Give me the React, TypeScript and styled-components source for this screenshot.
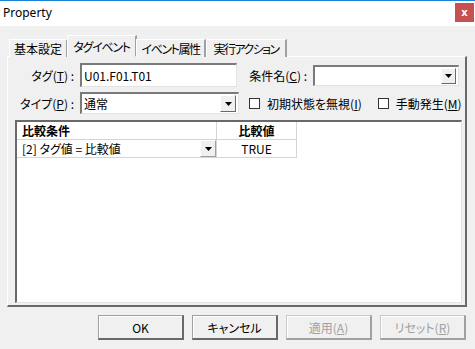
import React from 'react';
import styled, { createGlobalStyle } from 'styled-components';

const GlobalStyle = createGlobalStyle`
  html, body {
    margin: 0;
    padding: 0;
    background: #f0f0f0;
  }
  body {
    font-family: "Noto Sans CJK JP", "Noto Sans", sans-serif;
    font-size: 12px;
    font-feature-settings: "palt";
    color: #000;
  }
`;

const Window = styled.div`
  width: 475px;
  height: 349px;
  display: flex;
  flex-direction: column;
  background: #f0f0f0;
  overflow: hidden;
`;

const TitleBar = styled.div`
  height: 25px;
  border-top: 1px solid #1883d7;
  background: #fff;
  display: flex;
  align-items: center;
  justify-content: space-between;
  padding-left: 3px;
`;

const Title = styled.div`
  font-family: "Noto Sans", "Liberation Sans", sans-serif;
  font-size: 12px;
  margin-top: -2px;
`;

const CloseButton = styled.div`
  width: 19px;
  height: 19px;
  margin-right: 1px;
  margin-top: -3px;
  background: #c75050;
  color: #fff;
  font-family: "DejaVu Sans", sans-serif;
  font-weight: bold;
  font-size: 10px;
  display: flex;
  align-items: center;
  justify-content: center;
`;

const Body = styled.div`
  flex: 1;
  padding: 9px 8px 0 7px;
  display: flex;
  flex-direction: column;
`;

const TabRow = styled.div`
  display: flex;
  align-items: flex-end;
  height: 22px;
  padding-left: 2px;
  position: relative;
  z-index: 1;
`;

const Tab = styled.div<{ $active?: boolean; $w: number; $ls?: number }>`
  width: ${p => p.$w}px;
  height: ${p => (p.$active ? 22 : 18)}px;
  margin: 0 ${p => (p.$active ? -1 : 0)}px;
  box-sizing: border-box;
  background: #f0f0f0;
  border-top: 1px solid #fff;
  border-left: 1px solid #fff;
  border-right: 2px solid #a0a0a0;
  border-bottom: ${p => (p.$active ? '1px solid #f0f0f0' : 'none')};
  display: flex;
  align-items: center;
  justify-content: center;
  font-size: 12px;
  letter-spacing: ${p => p.$ls ?? 0}px;
  white-space: nowrap;
`;

const Panel = styled.div`
  height: 251px;
  box-sizing: border-box;
  border-top: 1px solid #fff;
  border-left: 1px solid #fff;
  border-right: 2px solid #696969;
  border-bottom: 2px solid #696969;
  margin-top: -1px;
  padding: 6px 0 0 7px;
  display: flex;
  flex-direction: column;
`;

const FormRow = styled.div<{ $mt?: number }>`
  display: flex;
  align-items: center;
  margin-top: ${p => p.$mt ?? 0}px;
`;

const Label = styled.div<{ $w: number }>`
  width: ${p => p.$w}px;
  text-align: right;
  padding-right: 6px;
  box-sizing: border-box;
  white-space: nowrap;
`;

const TextBox = styled.div<{ $w: number; $h: number }>`
  width: ${p => p.$w}px;
  height: ${p => p.$h}px;
  box-sizing: border-box;
  background: #fff;
  border-top: 2px solid #7a7a7a;
  border-left: 2px solid #7a7a7a;
  border-right: 1px solid #e3e3e3;
  border-bottom: 1px solid #e3e3e3;
  padding: 1px 2px;
  display: flex;
  align-items: center;
  position: relative;
`;

const DropButton = styled.div<{ $size: number }>`
  position: absolute;
  right: 2px;
  top: 1px;
  bottom: 1px;
  width: ${p => p.$size}px;
  box-sizing: border-box;
  background: #f0f0f0;
  border-top: 1px solid #fff;
  border-left: 1px solid #fff;
  border-right: 1px solid #696969;
  border-bottom: 1px solid #696969;
  display: flex;
  align-items: center;
  justify-content: center;
`;

const Arrow = () => (
  <svg width="7" height="4" viewBox="0 0 7 4">
    <path d="M0 0H7L3.5 4Z" fill="#000" />
  </svg>
);

const Check = styled.div<{ $ml: number }>`
  display: flex;
  align-items: center;
  gap: 7px;
  margin-left: ${p => p.$ml}px;
  white-space: nowrap;
`;

const CheckBox = styled.div`
  width: 11px;
  height: 11px;
  box-sizing: border-box;
  background: #fff;
  border: 1px solid #333;
`;

const Grid = styled.div`
  margin-top: 6px;
  width: 447px;
  height: 183px;
  box-sizing: border-box;
  background: #fff;
  border-top: 2px solid #696969;
  border-left: 2px solid #696969;
  border-right: 1px solid #e3e3e3;
  border-bottom: 1px solid #e3e3e3;
`;

const GridRow = styled.div`
  display: flex;
  height: 18px;
`;

const Cell = styled.div<{ $w: number; $head?: boolean; $center?: boolean }>`
  width: ${p => p.$w}px;
  box-sizing: border-box;
  border-right: 1px solid #d4d4d4;
  border-bottom: 1px solid #d4d4d4;
  padding: 0 5px;
  display: flex;
  align-items: center;
  justify-content: ${p => (p.$center ? 'center' : 'flex-start')};
  font-weight: ${p => (p.$head ? 'bold' : 'normal')};
  position: relative;
  white-space: nowrap;
`;

const HeaderFill = styled.div`
  flex: 1;
`;

const CellDrop = styled.div`
  position: absolute;
  right: 0;
  top: 0;
  bottom: 0;
  width: 16px;
  box-sizing: border-box;
  background: #f0f0f0;
  border-top: 1px solid #fff;
  border-left: 1px solid #fff;
  border-right: 1px solid #a0a0a0;
  border-bottom: 1px solid #a0a0a0;
  display: flex;
  align-items: center;
  justify-content: center;
`;

const ButtonRow = styled.div`
  display: flex;
  justify-content: flex-end;
  gap: 8px;
  margin-top: 8px;
  padding-right: 1px;
`;

const Button = styled.div<{ $disabled?: boolean }>`
  width: 86px;
  height: 25px;
  box-sizing: border-box;
  background: #f0f0f0;
  border-top: 1px solid ${p => (p.$disabled ? '#c8c8c8' : '#a0a0a0')};
  border-left: 1px solid ${p => (p.$disabled ? '#c8c8c8' : '#a0a0a0')};
  border-right: 2px solid ${p => (p.$disabled ? '#a0a0a0' : '#696969')};
  border-bottom: 2px solid ${p => (p.$disabled ? '#a0a0a0' : '#696969')};
  box-shadow: inset 1px 1px 0 #fff;
  display: flex;
  align-items: center;
  justify-content: center;
  color: ${p => (p.$disabled ? '#a0a0a0' : '#000')};
  white-space: nowrap;
`;

export default function App() {
  return (
    <>
      <GlobalStyle />
      <Window>
        <TitleBar>
          <Title>Property</Title>
          <CloseButton>x</CloseButton>
        </TitleBar>
        <Body>
          <TabRow>
            <Tab $w={59}>基本設定</Tab>
            <Tab $active $w={70} $ls={-1.3}>
              タグイベント
            </Tab>
            <Tab $w={70} $ls={-1.4}>
              イベント属性
            </Tab>
            <Tab $w={81} $ls={-1.6}>
              実行アクション
            </Tab>
          </TabRow>
          <Panel>
            <FormRow>
              <Label $w={65}>
                タグ(<u>T</u>) :
              </Label>
              <TextBox $w={157} $h={24}>U01.F01.T01</TextBox>
              <Label $w={76}>
                条件名(<u>C</u>) :
              </Label>
              <TextBox $w={146} $h={21}>
                <DropButton $size={15}>
                  <Arrow />
                </DropButton>
              </TextBox>
            </FormRow>
            <FormRow $mt={5}>
              <Label $w={65}>
                タイプ(<u>P</u>) :
              </Label>
              <TextBox $w={159} $h={22}>
                通常
                <DropButton $size={16}>
                  <Arrow />
                </DropButton>
              </TextBox>
              <Check $ml={10}>
                <CheckBox />
                <span>
                  初期状態を無視(<u>I</u>)
                </span>
              </Check>
              <Check $ml={16}>
                <CheckBox />
                <span>
                  手動発生(<u>M</u>)
                </span>
              </Check>
            </FormRow>
            <Grid>
              <GridRow>
                <Cell $w={200} $head>
                  比較条件
                </Cell>
                <Cell $w={80} $head $center>
                  比較値
                </Cell>
                <HeaderFill />
              </GridRow>
              <GridRow>
                <Cell $w={200}>
                  [2] タグ値 = 比較値
                  <CellDrop>
                    <Arrow />
                  </CellDrop>
                </Cell>
                <Cell $w={80} $center>
                  TRUE
                </Cell>
              </GridRow>
            </Grid>
          </Panel>
          <ButtonRow>
            <Button>OK</Button>
            <Button>キャンセル</Button>
            <Button $disabled>
              適用(<u>A</u>)
            </Button>
            <Button $disabled>
              リセット(<u>R</u>)
            </Button>
          </ButtonRow>
        </Body>
      </Window>
    </>
  );
}
